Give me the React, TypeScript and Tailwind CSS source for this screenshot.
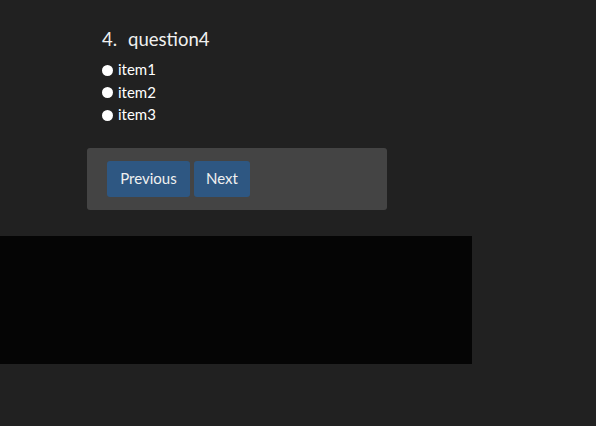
import React, { useState } from "react";

const items = ["item1", "item2", "item3"];

export default function App() {
  const [value, setValue] = useState<string | null>(null);

  return (
    <div
      className="min-h-[426px] w-full bg-[#212121] text-[#f0f0f0]"
      style={{ fontFamily: "Lato, 'Open Sans', sans-serif" }}
    >
      <div className="pt-[28px] pl-[87px]">
        <div className="w-[300px]">
          <div className="pl-[15px]">
            <h3 className="flex gap-[11px] text-[18.5px] leading-[22px] font-normal">
              <span>4.</span>
              <span>question4</span>
            </h3>
            <div className="mt-[8px] flex flex-col">
              {items.map((it) => (
                <label key={it} className="flex h-[22.5px] items-center text-[15px] leading-[22px] text-white">
                  <span
                    onClick={() => setValue(it)}
                    className="mr-[5px] mt-[2px] flex h-[11px] w-[11px] items-center justify-center rounded-full bg-white"
                  >
                    {value === it ? <span className="h-[5px] w-[5px] rounded-full bg-[#333]" /> : null}
                  </span>
                  {it}
                </label>
              ))}
            </div>
          </div>
          <div className="mt-[22px] flex h-[62px] items-center gap-[4px] rounded-[3px] bg-[#444444] pl-[20px]">
            <button
              type="button"
              className="h-[36px] w-[83px] rounded-[3px] bg-[#2e5782] text-[15px] text-[#f0f0f0]"
            >
              Previous
            </button>
            <button
              type="button"
              className="h-[36px] w-[56px] rounded-[3px] bg-[#2e5782] text-[15px] text-[#f0f0f0]"
            >
              Next
            </button>
          </div>
        </div>
      </div>
      <div className="mt-[26px] h-[128px] w-[472px] bg-[#050505]" />
    </div>
  );
}
